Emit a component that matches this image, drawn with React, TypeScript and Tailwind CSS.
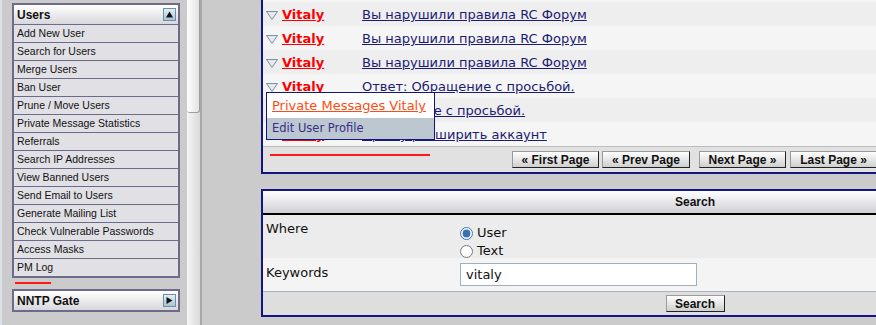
const menuItems = [
  'Add New User',
  'Search for Users',
  'Merge Users',
  'Ban User',
  'Prune / Move Users',
  'Private Message Statistics',
  'Referrals',
  'Search IP Addresses',
  'View Banned Users',
  'Send Email to Users',
  'Generate Mailing List',
  'Check Vulnerable Passwords',
  'Access Masks',
  'PM Log',
]

const messages = [
  'Вы нарушили правила RC Форум',
  'Вы нарушили правила RC Форум',
  'Вы нарушили правила RC Форум',
  'Ответ: Обращение с просьбой.',
  'Обращение с просьбой.',
  'Прошу расширить аккаунт',
]

function RowArrow() {
  return (
    <svg width="12" height="9" viewBox="0 0 12 9" className="shrink-0">
      <path d="M0.5 0.5 H11.5 L6 8.5 Z" fill="#e4e8f0" stroke="#7d8ea6" strokeWidth="1" />
    </svg>
  )
}

function ToggleBtn({ dir }: { dir: 'up' | 'right' }) {
  return (
    <div className="w-[13px] h-[13px] border border-[#6f8fa6] bg-gradient-to-b from-[#e2eef5] to-[#a9c3d3] flex items-center justify-center">
      <svg width="7" height="7" viewBox="0 0 7 7">
        {dir === 'up' ? <path d="M0 6.5 L3.5 0.5 L7 6.5 Z" fill="#111" /> : <path d="M0.5 0 L6.5 3.5 L0.5 7 Z" fill="#111" />}
      </svg>
    </div>
  )
}

function PageButton({ label, className }: { label: string; className?: string }) {
  return (
    <div
      className={`h-[17px] flex items-center justify-center border border-t-[#9a9a9a] border-l-[#9a9a9a] border-r-[#222] border-b-[#222] bg-gradient-to-b from-white to-[#cfcfcf] font-['Liberation_Sans',sans-serif] font-bold text-[12px] text-[#111] ${className ?? ''}`}
    >
      {label}
    </div>
  )
}

export default function App() {
  return (
    <div className="w-[876px] h-[325px] overflow-hidden bg-[#cbcbcb] flex font-['DejaVu_Sans',sans-serif]">
      {/* sidebar */}
      <aside className="w-[187px] shrink-0 border-l-2 border-[#dde1e8] pl-[10px] pt-[3px]">
        <div className="w-[168px] border-2 border-[#6c6b8d] bg-[#e1e0e5] font-['Liberation_Sans',sans-serif]">
          <div className="h-[19px] flex items-center justify-between pl-[3px] pr-[2px] bg-gradient-to-b from-white to-[#d8d8dc] font-bold text-[12px] text-[#111]">
            <span>Users</span>
            <ToggleBtn dir="up" />
          </div>
          {menuItems.map(item => (
            <div key={item} className="h-[18px] border-t border-[#6c6b8d] pl-[3px] flex items-center text-[10.5px] text-[#111]">
              {item}
            </div>
          ))}
        </div>
        <div className="w-[36px] h-[2px] bg-[#ff1a1a] ml-[3px] mt-[4px]" />
        <div className="w-[168px] mt-[5px] border-2 border-[#6c6b8d] h-[23px] pl-[3px] pr-[2px] flex items-center justify-between bg-gradient-to-b from-white to-[#d8d8dc] font-['Liberation_Sans',sans-serif] font-bold text-[12px] text-[#111]">
          <span>NNTP Gate</span>
          <ToggleBtn dir="right" />
        </div>
      </aside>

      {/* scrollbar */}
      <div className="w-[15px] shrink-0 h-full bg-gradient-to-r from-[#f6f6f6] to-[#d9d9d9] border-r-2 border-[#a8a8a8]">
        <div className="h-[113px] rounded-b-[3px] border-b border-r border-[#9d9d9d] bg-gradient-to-r from-white to-[#e2e2e2]" />
      </div>

      {/* main */}
      <main className="ml-[59px] w-[868px] shrink-0 flex flex-col">
        <div className="relative border-l-2 border-b-2 border-[#141482] bg-[#f5f5f5] pt-[2px]">
          {messages.map((msg, i) => (
            <div key={i} className={`h-[24px] flex items-center pl-[3px] pt-[2px] text-[13px] ${i % 2 === 0 ? 'bg-[#eeeeee]' : 'bg-[#f5f5f5]'}`}>
              <RowArrow />
              <a className="ml-[4px] w-[80px] font-bold text-[#ff0000] underline">Vitaly</a>
              <a className="text-[#1b1b72] underline">{msg}</a>
            </div>
          ))}
          <div className="relative h-[26px] border-t border-[#bcbcbc] bg-[#e1e1e1] flex items-center">
            <div className="absolute left-[7px] top-[7px] w-[160px] h-[2px] bg-[#ff1a1a]" />
            <PageButton label="« First Page" className="ml-[249px] w-[87px]" />
            <PageButton label="« Prev Page" className="ml-[3px] w-[88px]" />
            <PageButton label="Next Page »" className="ml-[9px] w-[87px]" />
            <PageButton label="Last Page »" className="ml-[4px] w-[87px]" />
          </div>

          {/* context menu */}
          <div className="absolute left-[3px] top-[92px] w-[169px] border border-[#141482] bg-white">
            <div className="h-[25px] flex items-center pl-[5px] pt-[1px] text-[13px] text-[#ff4a12] underline">Private Messages Vitaly</div>
            <div className="h-[21px] flex items-center pl-[5px] bg-[#bcc7cf] text-[11.5px] text-[#3b2c8c]">Edit User Profile</div>
          </div>
        </div>

        {/* search */}
        <div className="mt-[15px] border-2 border-[#141482] text-[13px] text-[#111]">
          <div className="h-[24px] border-b-2 border-black bg-gradient-to-b from-white to-[#cfcfd6] flex items-center justify-center font-['Liberation_Sans',sans-serif] font-bold text-[12px]">
            Search
          </div>
          <div className="grid grid-cols-[197px_1fr] bg-[#ececec] h-[43px]">
            <div className="pl-[3px] pt-[4px]">Where</div>
            <div className="pt-[11px] flex flex-col gap-[4px]">
              <label className="flex items-center gap-[4px] h-[14px]">
                <input type="radio" name="where" defaultChecked className="w-[13px] h-[13px] m-0 accent-[#3a72b0]" />
                User
              </label>
              <label className="flex items-center gap-[4px] h-[14px]">
                <input type="radio" name="where" className="w-[13px] h-[13px] m-0" />
                Text
              </label>
            </div>
          </div>
          <div className="grid grid-cols-[197px_1fr] bg-[#f4f4f4] h-[34px] border-b border-[#a4b4c2]">
            <div className="pl-[3px] pt-[5px]">Keywords</div>
            <div className="pt-[5px]">
              <input
                defaultValue="vitaly"
                className="w-[237px] h-[23px] border border-[#9db0bf] bg-white px-[5px] text-[13px] font-['DejaVu_Sans',sans-serif] outline-none"
              />
            </div>
          </div>
          <div className="h-[23px] bg-[#dedede] flex items-center justify-center">
            <PageButton label="Search" className="w-[59px]" />
          </div>
        </div>
      </main>
    </div>
  )
}
